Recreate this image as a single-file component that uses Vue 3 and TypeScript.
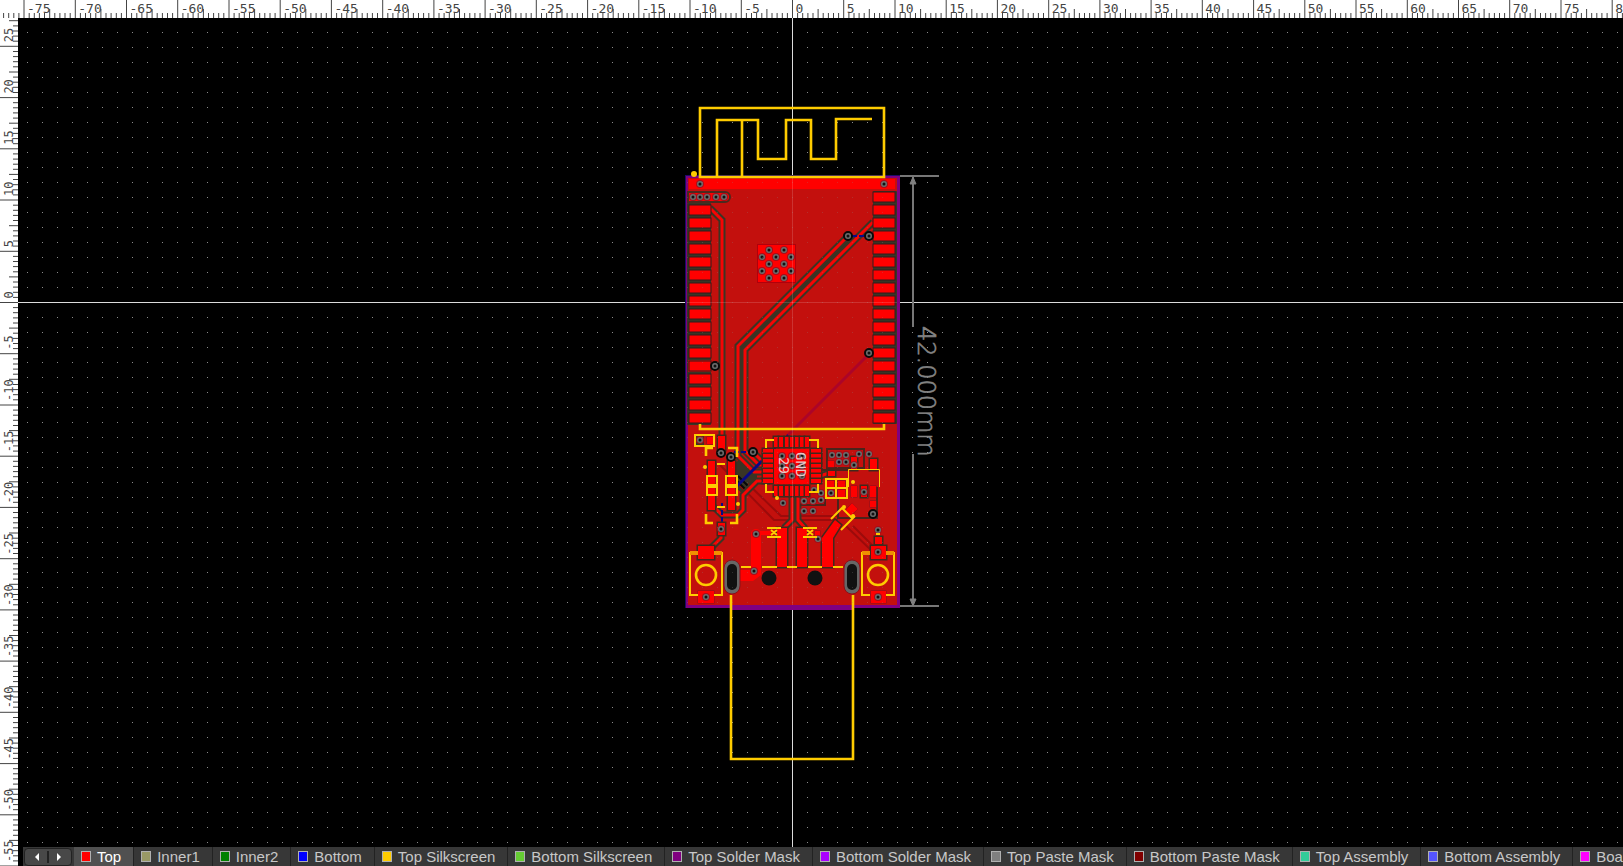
<script setup lang="ts">
import { ref } from 'vue'

interface Layer { name: string; color: string }
interface Tick { pos: number; depth: number; label: string }
type Box = [number, number, number, number]
type Point = [number, number]

const layers: Layer[] = [
  { name: 'Top', color: '#ff0000' },
  { name: 'Inner1', color: '#999966' },
  { name: 'Inner2', color: '#008000' },
  { name: 'Bottom', color: '#0000ff' },
  { name: 'Top Silkscreen', color: '#ffcc00' },
  { name: 'Bottom Silkscreen', color: '#66cc33' },
  { name: 'Top Solder Mask', color: '#800080' },
  { name: 'Bottom Solder Mask', color: '#aa00ff' },
  { name: 'Top Paste Mask', color: '#808080' },
  { name: 'Bottom Paste Mask', color: '#800000' },
  { name: 'Top Assembly', color: '#33cc99' },
  { name: 'Bottom Assembly', color: '#5555ff' },
  { name: 'Board Outline', color: '#ff00ff' },
]
const active = ref('Top')

const SCALE = 10.246
const ORIGIN_X = 792.5
const ORIGIN_Y = 302.5

function makeTicks(from: number, to: number, origin: number, dir: number): Tick[] {
  const list: Tick[] = []
  for (let i = from * 2; i <= to * 2; i++) {
    const major = i % 10 === 0
    list.push({
      pos: Math.round((origin + (dir * i * SCALE) / 2) * 10) / 10,
      depth: major ? 18 : i % 5 === 0 ? 9 : 5,
      label: major ? String(i / 2) : '',
    })
  }
  return list
}
const xTicks = makeTicks(-77, 82, ORIGIN_X, 1)
const yTicks = makeTicks(-55, 27.5, ORIGIN_Y, -1)

const leftPads = Array.from({ length: 17 }, (_, i) => 205 + i * 13)
const rightPads = Array.from({ length: 18 }, (_, i) => 192 + i * 13)

const pinX = [776, 781, 787, 792, 797, 802, 807]
const pinY = [451, 456, 461, 466, 471, 476, 481]

const darkPads: Box[] = [
  [718, 436, 7, 14], [708, 461, 7, 14], [708, 496, 7, 14], [728, 461, 7, 14], [728, 496, 7, 14],
  [718, 523, 7, 12], [698, 546, 16, 13], [871, 546, 15, 13], [875, 537, 7, 7],
  [777, 528, 10, 39], [797, 528, 10, 39], [870, 459, 7, 11], [861, 486, 6, 11],
  [851, 457, 6, 13], [828, 471, 7, 5],
]
const plainPads: Box[] = [
  [707, 437, 7, 7], [708, 477, 7, 7], [708, 487, 7, 8], [728, 477, 7, 7], [728, 487, 7, 8],
  [698, 591, 16, 12], [871, 591, 15, 12], [828, 461, 6, 6], [851, 486, 6, 11], [870, 486, 6, 11],
  [870, 501, 6, 6], [827, 481, 7, 6], [838, 481, 7, 6], [827, 490, 7, 7], [838, 490, 7, 7],
  [815, 531, 5, 7],
]
const vias: Point[] = [
  [700, 184], [884, 184], [693, 197], [700, 197], [707, 197], [716, 197], [724, 197],
  [769, 250], [784, 250], [762, 257], [776, 257], [791, 257], [769, 264], [784, 264],
  [762, 271], [776, 271], [791, 271], [769, 278], [784, 278],
  [782, 456], [792, 456], [802, 456], [782, 466], [792, 466], [802, 466], [782, 476], [792, 476], [802, 476],
  [700, 440], [721, 529], [706, 597], [878, 552], [878, 597], [878, 530], [756, 534], [754, 571],
  [832, 455], [839, 455], [846, 455], [839, 462], [846, 462], [854, 465], [859, 454], [869, 454],
  [831, 493], [864, 492], [814, 490], [821, 493], [821, 500], [804, 501], [813, 501], [804, 511], [813, 511],
  [783, 503], [818, 539],
]
const ringVias: Point[] = [[848, 236], [869, 236], [869, 353], [715, 366], [721, 453], [731, 457], [753, 452], [873, 514]]

const traces: string[] = [
  'M710 208L722 220V437',
  'M848 236L738 346V456L754 472H770',
  'M873 222L745 350V451L759 465H770',
  'M753 452L762 461H770',
  'M712 505L722 515H738L743 510V495L757 481H770',
  'M792 486V520L784 528',
  'M798 486V520L805 528',
  'M721 532V538L711 548',
  'M820 476L832 472',
]
const silk: string[] = [
  'M700 177V108H884V177Z',
  'M717 177V120H758V159H786V120H811V159H836V119H872M742 120V177',
  'M700 424V429H884V424',
  'M706 456V448H713M728 448H737V457M706 514V523H713M730 523H737V514',
  'M731 595V759H853V595',
]
const silkThin: string[] = [
  'M695 435H714V446H695Z',
  'M717 464H725M717 507H725',
  'M707 476H717V485H707ZM707 487H717V495H707ZM726 476H737V485H726ZM726 487H737V495H726Z',
  'M766 448V440H774M809 440H818V448M766 484V492H774M809 492H818V484',
  'M698 595H690V552M722 552V595H714M870 595H862V552M894 552V595H886',
  'M741 567H751M762 567H777M787 567H797M808 567H822M833 567H843',
  'M767 528H781M767 537H781M803 528H817M803 537H817',
  'M826 479H847V498H826ZM826 488H847M836 479V498',
  'M831 519L842 508L853 519M841 530L855 516',
  'M876 534H880',
]
</script>

<template>
  <main class="editor">
    <svg class="ruler-top" role="img" aria-label="Horizontal ruler">
      <g v-for="t in xTicks" :key="t.pos">
        <line :x1="t.pos" :x2="t.pos" :y1="18 - t.depth" y2="18" />
        <text v-if="t.label" :x="t.pos + 3" y="13">{{ t.label }}</text>
      </g>
    </svg>

    <svg class="ruler-left" role="img" aria-label="Vertical ruler">
      <g v-for="t in yTicks" :key="t.pos">
        <line :x1="18 - t.depth" x2="18" :y1="t.pos" :y2="t.pos" />
        <text v-if="t.label" :transform="`translate(13 ${t.pos - 4}) rotate(-90)`">{{ t.label }}</text>
      </g>
    </svg>

    <svg class="board" role="img" aria-label="Board layout">
      <defs>
        <pattern id="grid" x="27" y="32" width="15" height="15" patternUnits="userSpaceOnUse">
          <rect width="1" height="1" fill="#8c8c8c" />
        </pattern>
        <g id="via">
          <circle r="3" fill="#6c6c6c" />
          <circle r="1.5" fill="#111" />
        </g>
      </defs>
      <g transform="translate(-18 -18)">
        <rect x="18" y="18" width="100%" height="100%" fill="url(#grid)" />
        <path class="cross" d="M18 302.5H4000M792.5 18V4000" />

        <rect x="685" y="175" width="215" height="433" fill="#1c0c68" />
        <rect x="686" y="176" width="214" height="432" fill="#800080" />
        <rect x="732" y="600" width="120" height="10" fill="#800080" />
        <rect x="688" y="178" width="209" height="427" class="pour" />

        <rect x="689" y="179" width="206" height="10" class="cu" />
        <rect x="687" y="203" width="24" height="222" rx="1" class="gap" />
        <rect x="688" y="360" width="24" height="12" class="pour" />
        <rect x="873" y="191" width="24" height="233" rx="1" class="gap" />
        <path class="slot" d="M688 192H725A5 5 0 0 1 725 202H688Z" />

        <path class="gap" d="M738 346L843 241L860 235L745 350V451L738 456Z" />
        <path class="gap" d="M735 462L744 459L757 473V482L744 495L736 488Z" />
        <path class="hidden-trace" d="M869 354L787 436" />
        <path class="faint-trace" d="M720 465L774 520H838M748 484L781 516H838M846 526L873 552M853 526L876 549" />
        <path class="black-trace" d="M738 476L749 487M736 480L746 490" />
        <path v-for="d in traces" :key="'gap' + d" :d="d" class="clear" />
        <path v-for="d in traces" :key="d" :d="d" class="trace" />
        <path class="blue-trace" d="M735 488L762 461" />
        <path class="blue-trace dashed" d="M852 236H867M762 461L788 435M734 452H750M722 503V526" />

        <rect v-for="y in leftPads" :key="'l' + y" x="689" :y="y" width="22" height="10" class="cu pad-edge" />
        <rect v-for="y in rightPads" :key="'r' + y" x="873" :y="y" width="22" height="10" class="cu pad-edge" />
        <path class="trace" d="M710 366H715M869 353H874M869 236H874" />
        <rect x="757.5" y="244.5" width="38" height="38" class="cu thermal" />

        <path class="outline" d="M827 449H864V468H827ZM838 498V518H877V487M817 500H825V505H800M822 470H848" />

        <g v-for="x in pinX" :key="'px' + x">
          <rect :x="x - 2" y="437" width="4" height="10" class="cu dark-edge" />
          <rect :x="x - 2" y="486" width="4" height="10" class="cu dark-edge" />
        </g>
        <g v-for="y in pinY" :key="'py' + y">
          <rect x="763" :y="y - 2" width="10" height="4" class="cu dark-edge" />
          <rect x="811" :y="y - 2" width="10" height="4" class="cu dark-edge" />
        </g>
        <rect x="774" y="449" width="35" height="35" class="cu" />

        <path class="cu" d="M751 535A5 5 0 0 1 761 533V575L753 581H738V570H751Z" />
        <path class="cu" d="M756 531H771V535H756Z" />
        <path class="cu dark-edge" d="M822 567V538L835 520L841 525L833 538V567Z" />
        <rect v-for="(b, i) in darkPads" :key="'d' + i" :x="b[0]" :y="b[1]" :width="b[2]" :height="b[3]" class="cu dark-edge" />
        <rect v-for="(b, i) in plainPads" :key="'p' + i" :x="b[0]" :y="b[1]" :width="b[2]" :height="b[3]" class="cu soft-edge" />
        <path class="cu soft-edge" d="M845 511L852 503L858 509L850 516Z" />
        <rect x="696" y="436" width="8" height="9" class="gap" />

        <rect x="724" y="560" width="16" height="34" rx="8" class="slot-hole" />
        <rect x="844" y="560" width="16" height="34" rx="8" class="slot-hole" />
        <rect x="727" y="564" width="10" height="26" rx="5" fill="#111" />
        <rect x="847" y="564" width="10" height="26" rx="5" fill="#111" />
        <circle cx="769" cy="578" r="7.5" fill="#111" />
        <circle cx="815" cy="578" r="7.5" fill="#111" />

        <g v-for="(v, i) in ringVias" :key="'rv' + i">
          <circle :cx="v[0]" :cy="v[1]" r="4" class="ring" />
          <use href="#via" :x="v[0]" :y="v[1]" />
        </g>
        <g v-for="(v, i) in vias" :key="'v' + i">
          <circle :cx="v[0]" :cy="v[1]" r="4" fill="#a80c18" />
          <use href="#via" :x="v[0]" :y="v[1]" />
        </g>

        <path v-for="d in silk" :key="d" :d="d" class="silk" />
        <path v-for="d in silkThin" :key="d" :d="d" class="silk thin" />
        <path class="silk fine" d="M848.5 487V469.5H879.5V487" />
        <path class="tab-edge" d="M690 553H698M714 553H722M862 553H870M886 553H894" />
        <circle cx="706" cy="575" r="10" class="silk" />
        <circle cx="878" cy="575" r="10" class="silk" />
        <path class="silk thin" d="M771 530L777 535M771 535L777 530M807 530L813 535M807 535L813 530" />
        <g fill="#ffcc00">
          <circle cx="694" cy="174" r="3" />
          <circle cx="705" cy="467" r="2" />
          <circle cx="738" cy="504" r="2" />
          <circle cx="777" cy="498" r="2" />
          <circle cx="853" cy="482" r="2" />
          <circle cx="844" cy="507" r="2" />
          <circle cx="853" cy="516" r="2" />
        </g>

        <rect x="687" y="178" width="210" height="427" fill="url(#grid)" opacity="0.25" />
        <path class="cross faint" d="M687 302.5H897M792.5 178V605" />

        <text class="pin-label" transform="translate(796 452) rotate(90)">GND</text>
        <text class="pin-label" transform="translate(779 457) rotate(90)">29</text>

        <path class="dim" d="M900 176H939M900 606H939M913 176V327M913 454V606" />
        <path d="M913 177L916 184H910ZM913 606L916 599H910Z" fill="#808080" stroke="#808080" />
        <text class="dim-label" transform="translate(918 326) rotate(90)">42.000mm</text>
      </g>
    </svg>

    <nav class="layer-bar" aria-label="Layers">
      <div class="scroller">
        <button type="button" aria-label="Previous layers"><svg viewBox="0 0 6 10"><path d="M5 1V9L1 5Z" /></svg></button>
        <span class="divider"></span>
        <button type="button" aria-label="Next layers"><svg viewBox="0 0 6 10"><path d="M1 1V9L5 5Z" /></svg></button>
      </div>
      <button
        v-for="layer in layers"
        :key="layer.name"
        type="button"
        class="layer"
        :class="{ active: layer.name === active }"
        @click="active = layer.name"
      >
        <span class="swatch" :style="{ background: layer.color }"></span>{{ layer.name }}
      </button>
    </nav>
  </main>
</template>

<style>
body {
  background: #000;
  overflow: hidden;
}
</style>

<style scoped>
.editor {
  display: grid;
  grid-template-columns: 18px minmax(0, 1fr);
  grid-template-rows: 18px minmax(0, 1fr) 19px;
  height: 100vh;
  background: #000;
  overflow: hidden;
}
svg { display: block; }
.ruler-top, .ruler-left {
  width: 100%;
  height: 100%;
  background: #fff;
  overflow: hidden;
}
.ruler-top { grid-area: 1 / 1 / 2 / 3; }
.ruler-left { grid-area: 1 / 1 / 4 / 2; clip-path: inset(18px 0 0 0); }
.ruler-top line, .ruler-left line { stroke: #444; stroke-width: 1; }
.ruler-top text { font: 13px "DejaVu Sans Mono", monospace; fill: #444; }
.ruler-left text { font: 12px "DejaVu Sans Mono", monospace; fill: #444; }
.board {
  grid-area: 2 / 2 / 3 / 3;
  width: 100%;
  height: 100%;
  overflow: hidden;
}
.cross { stroke: #dcdcdc; stroke-width: 1; fill: none; }
.cross.faint { stroke: #fff; opacity: 0.15; }
.pour { fill: #c3100d; }
.cu { fill: #ff0000; }
.gap { fill: #393525; }
.slot { fill: #ff0000; stroke: #4b2a1e; stroke-width: 2; }
.pad-edge { stroke: #331c1c; stroke-width: 1; }
.dark-edge { stroke: #42281c; stroke-width: 3; paint-order: stroke; }
.soft-edge { stroke: #8c0c1c; stroke-width: 1; paint-order: stroke; }
.thermal { stroke: #b0000c; stroke-width: 1; }
.clear { fill: none; stroke: #3c3424; stroke-width: 7; }
.trace { fill: none; stroke: #f80404; stroke-width: 3; }
.faint-trace { fill: none; stroke: #9c0b0b; stroke-width: 2; }
.black-trace { fill: none; stroke: #080808; stroke-width: 2; }
.hidden-trace { fill: none; stroke: #ac0428; stroke-width: 3; }
.blue-trace { fill: none; stroke: #080888; stroke-width: 3; }
.blue-trace.dashed { stroke-width: 2; stroke-dasharray: 5 2; }
.outline { fill: none; stroke: #4a241b; stroke-width: 2; }
.ring { fill: #222; stroke: #090909; stroke-width: 2; }
.slot-hole { fill: #666; stroke: #8c1018; stroke-width: 1; }
.silk { fill: none; stroke: #ffcc00; stroke-width: 2.6; }
.silk.thin { stroke-width: 2; }
.silk.fine { stroke-width: 1; }
.tab-edge { fill: none; stroke: #f09000; stroke-width: 4; }
.pin-label { font: 14px "DejaVu Sans Mono", monospace; fill: #e8c8c8; }
.dim { fill: none; stroke: #777; stroke-width: 2; }
.dim-label { font: 200 24px "DejaVu Sans", sans-serif; fill: #858585; stroke: #858585; stroke-width: 0.6; }

.layer-bar {
  grid-area: 3 / 2 / 4 / 3;
  display: flex;
  margin-left: 5px;
  overflow: hidden;
  background: #373737;
}
.scroller {
  display: flex;
  flex: none;
  align-items: center;
  justify-content: space-between;
  box-sizing: border-box;
  width: 48px;
  margin: 1px 2px 0 1px;
  padding: 0 6px;
  border: 1px solid #222;
  border-radius: 4px;
  background: #484848;
}
.scroller button { padding: 0; border: 0; background: none; }
.scroller svg { width: 12px; height: 10px; fill: #fff; }
.divider { width: 2px; height: 12px; background: #222; }
.layer {
  display: flex;
  flex: none;
  align-items: center;
  gap: 6px;
  padding: 0 12px 0 7px;
  border: 0;
  border-right: 1px solid #222;
  background: #373737;
  color: #c8c8c8;
  font: 15px "Liberation Sans", Arial, sans-serif;
  white-space: nowrap;
}
.layer.active { background: #505050; color: #fff; }
.swatch {
  box-sizing: border-box;
  width: 10px;
  height: 11px;
  border: 1px solid #b0b0b0;
}
</style>
